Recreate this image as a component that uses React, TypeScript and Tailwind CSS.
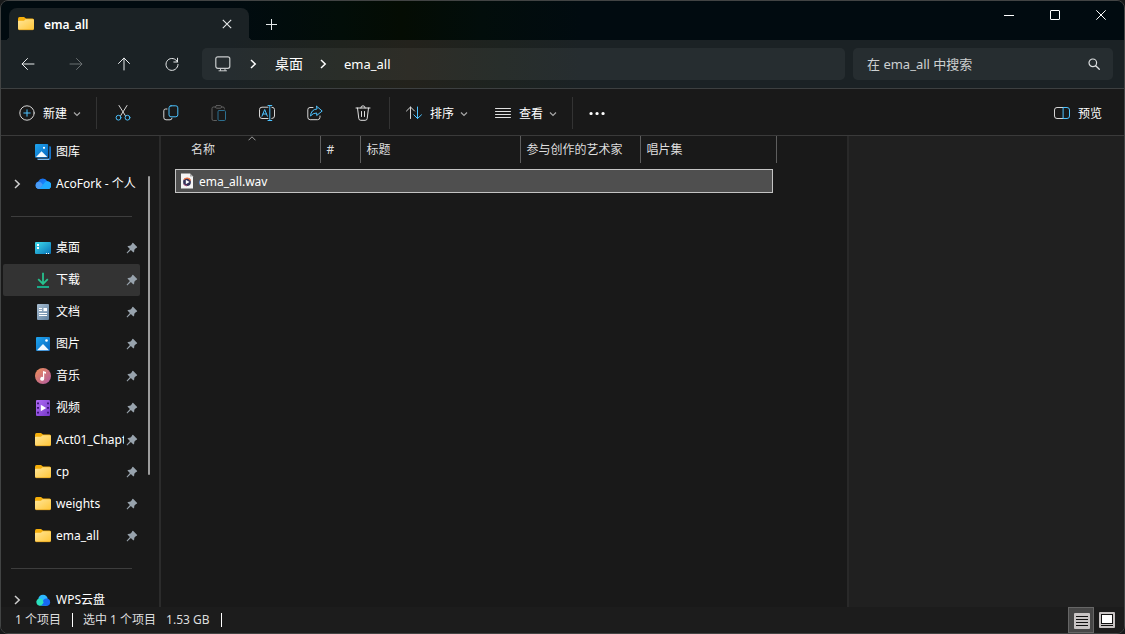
import type { ReactNode } from "react";

type IconProps = { children: ReactNode; className?: string };

function Line({ children, className = "" }: IconProps) {
  return (
    <svg viewBox="0 0 16 16" width="16" height="16" fill="none" stroke="currentColor" strokeLinecap="round" strokeLinejoin="round" className={`shrink-0 ${className}`} aria-hidden="true">
      {children}
    </svg>
  );
}

const BLUE = "#4cc2ff";

function Folder() {
  return (
    <svg viewBox="0 0 16 16" width="16" height="16" className="shrink-0" aria-hidden="true">
      <defs>
        <linearGradient id="folder" x1="0" y1="0" x2="1" y2="1">
          <stop offset="0" stopColor="#ffe69a" />
          <stop offset="1" stopColor="#ffc637" />
        </linearGradient>
      </defs>
      <path d="M0 3Q0 1 1.5 1H6L8 2.5H14.5Q16 2.5 16 4V8H0Z" fill="#f5ae0a" />
      <path d="M0 5.5Q0 4.8 .8 4.8H6L7.6 3.2H15Q16 3.2 16 4.2V12.6Q16 14 14.7 14H1.3Q0 14 0 12.6Z" fill="url(#folder)" />
      <path d="M.3 13Q.6 13.7 1.4 13.7H14.6Q15.4 13.7 15.7 13" stroke="#e2a21c" strokeWidth=".7" fill="none" />
    </svg>
  );
}

function Picture({ stacked = false }: { stacked?: boolean }) {
  return (
    <svg viewBox="0 0 16 16" width="16" height="16" className="shrink-0" aria-hidden="true">
      <defs>
        <linearGradient id="pic" x1="0" y1="0" x2="1" y2="1">
          <stop offset="0" stopColor="#1fa5ee" />
          <stop offset="1" stopColor="#0866c0" />
        </linearGradient>
      </defs>
      {stacked ? (
        <>
          <path d="M14.2 2.2H15Q16 2.2 16 3.4V14Q16 16 14 16H3.5Q2.3 16 2.3 14.8H13Q14.2 14.8 14.2 13Z" fill="#1774c9" />
          <path d="M2.3 14.8H14V16H3.5Q2.6 16 2.3 14.8Z" fill="#79b8ee" />
          <rect width="13.2" height="13.8" rx="1" fill="url(#pic)" />
          <path d="M1 13L6.5 7.2L12.3 13Z" fill="#f2f9ff" />
          <circle cx="9" cy="3.8" r="1.1" fill="#fff" />
        </>
      ) : (
        <>
          <rect x="1" y="1" width="14" height="14" rx="1" fill="url(#pic)" />
          <path d="M2 14.2L8 8L14 14.2Z" fill="#f2f9ff" />
          <circle cx="11.5" cy="4.5" r="1.3" fill="#fff" />
        </>
      )}
    </svg>
  );
}

function OneDrive() {
  return (
    <svg viewBox="0 0 16 16" width="16" height="16" className="shrink-0" aria-hidden="true">
      <defs>
        <linearGradient id="od" x1="0" y1="0" x2="1" y2="1">
          <stop offset="0" stopColor="#1c62dd" />
          <stop offset=".5" stopColor="#1584ff" />
          <stop offset="1" stopColor="#37c0ff" />
        </linearGradient>
      </defs>
      <path d="M4 13A3.9 3.9 0 0 1 3.2 5.4A5.2 5.2 0 0 1 12.3 5.2A3.9 3.9 0 0 1 12.2 13Z" fill="url(#od)" />
      <path d="M5 12.3L10.2 5.9Q11.2 4.9 12.3 5.2A3.9 3.9 0 0 1 12.2 13H4Q4.5 13 5 12.3Z" fill="#20aaff" />
      <path d="M1 11.3Q.2 9 1.4 7.1Q4 4.7 6.3 6.8L7.8 8.8L4.4 13Q2 12.8 1 11.3Z" fill="#4b9cf5" />
    </svg>
  );
}

function WpsCloud() {
  return (
    <svg viewBox="0 0 16 16" width="16" height="16" className="shrink-0" aria-hidden="true">
      <circle cx="8" cy="7.4" r="4.7" fill="#2db8ff" />
      <circle cx="11.5" cy="10.2" r="3.6" fill="#1769f2" />
      <path d="M4.5 13.7H12Q8 11.7 8 8Q5 5.1 2.3 7.5A3.7 3.7 0 0 0 4.5 13.7Z" fill="#2ae1bd" />
      <path d="M6 13.7L10 9.2L13 13.7Z" fill="#1769f2" />
    </svg>
  );
}

function Desktop() {
  return (
    <svg viewBox="0 0 16 16" width="16" height="16" className="shrink-0" aria-hidden="true">
      <defs>
        <linearGradient id="desk" x1="0" y1="0" x2="1" y2="1">
          <stop offset="0" stopColor="#3fdcec" />
          <stop offset="1" stopColor="#0872b8" />
        </linearGradient>
      </defs>
      <rect y="2" width="16" height="12" rx="1" fill="url(#desk)" />
      <path d="M2 4H4V6H2ZM2 7H4V9H2Z" fill="#fff" />
      <path d="M11 13.5H12M13 13.5H14" stroke="#fff" />
    </svg>
  );
}

function Download() {
  return (
    <svg viewBox="0 0 16 16" width="16" height="16" fill="none" className="shrink-0" aria-hidden="true">
      <path d="M8 .8V11.5M3.2 7.2L8 12L12.8 7.2" stroke="#27c18e" strokeWidth="1.8" />
      <path d="M2 15H14" stroke="#18b894" strokeWidth="1.8" />
    </svg>
  );
}

function Documents() {
  return (
    <svg viewBox="0 0 16 16" width="16" height="16" className="shrink-0" aria-hidden="true">
      <defs>
        <linearGradient id="doc" x1="0" y1="0" x2="1" y2="1">
          <stop offset="0" stopColor="#a9bfd3" />
          <stop offset="1" stopColor="#61819f" />
        </linearGradient>
      </defs>
      <rect x="2" width="12" height="16" rx="1" fill="url(#doc)" />
      <path d="M4 4.5H7M4 6.5H7M4 9.5H12M4 11.5H12" stroke="#fff" />
      <rect x="8.5" y="4" width="3.5" height="3.2" fill="#fff" />
    </svg>
  );
}

function Music() {
  return (
    <svg viewBox="0 0 16 16" width="16" height="16" className="shrink-0" aria-hidden="true">
      <defs>
        <linearGradient id="mus" x1="0" y1="0" x2="1" y2="1">
          <stop offset="0" stopColor="#f09057" />
          <stop offset="1" stopColor="#ae58a2" />
        </linearGradient>
      </defs>
      <circle cx="8" cy="8" r="8" fill="url(#mus)" />
      <path d="M8 3L11 4V5.8L9.2 5.3V10.7A2 2 0 1 1 8 9Z" fill="#fff" />
    </svg>
  );
}

function Video() {
  return (
    <svg viewBox="0 0 16 16" width="16" height="16" className="shrink-0" aria-hidden="true">
      <defs>
        <linearGradient id="vid" x1="0" y1="0" x2="1" y2="1">
          <stop offset="0" stopColor="#b06cf5" />
          <stop offset="1" stopColor="#7637c9" />
        </linearGradient>
      </defs>
      <rect x="1" width="14" height="16" rx="1" fill="url(#vid)" />
      <path d="M2 2.5H4V4.2H2ZM2 7H4V8.7H2ZM2 11.8H4V13.5H2ZM12 2.5H14V4.2H12ZM12 7H14V8.7H12ZM12 11.8H14V13.5H12Z" fill="#3d1578" />
      <path d="M5.8 4.8L11.2 8L5.8 11.2Z" fill="#fff" />
    </svg>
  );
}

function Pin() {
  return (
    <svg viewBox="0 0 12 12" width="12" height="12" className="shrink-0" aria-hidden="true">
      <path d="M7 .8L11.2 5Q11.2 6 10 6L8.3 7.8Q8.6 9.8 7.4 10.6L4.9 8.1L1.2 11.4L.6 10.8L3.9 7.1L1.4 4.6Q2.2 3.4 4.2 3.7L6 2Q6 .8 7 .8Z" fill="#98a3ad" />
    </svg>
  );
}

function Chevron({ className = "" }: { className?: string }) {
  return (
    <svg viewBox="0 0 8 10" width="8" height="10" fill="none" className={`shrink-0 ${className}`} aria-hidden="true">
      <path d="M2 1L6.2 5L2 9" stroke="currentColor" strokeWidth="1.5" />
    </svg>
  );
}

function Caret() {
  return (
    <svg viewBox="0 0 8 8" width="8" height="8" fill="none" stroke="#a8a8a8" className="shrink-0" aria-hidden="true">
      <path d="M1 2.5L4 5.5L7 2.5" strokeWidth="1.2" />
    </svg>
  );
}

type Place = { label: string; icon: ReactNode; active?: boolean };

const pinned: Place[] = [
  { label: "桌面", icon: <Desktop /> },
  { label: "下载", icon: <Download />, active: true },
  { label: "文档", icon: <Documents /> },
  { label: "图片", icon: <Picture /> },
  { label: "音乐", icon: <Music /> },
  { label: "视频", icon: <Video /> },
  { label: "Act01_Chapter", icon: <Folder /> },
  { label: "cp", icon: <Folder /> },
  { label: "weights", icon: <Folder /> },
  { label: "ema_all", icon: <Folder /> },
];

function PlaceRow({ place, expandable = false, pin = false }: { place: Place; expandable?: boolean; pin?: boolean }) {
  return (
    <li className="shrink-0">
      <a
        href="#"
        aria-current={place.active ? "page" : undefined}
        className={`flex h-8 items-center rounded-xs pr-0.5 pl-2.5 text-white ${place.active ? "bg-[#333333]" : "hover:bg-[#2a2a2a]"}`}
      >
        <span className="flex w-[22px] shrink-0">{expandable && <Chevron className="text-[#cfcfcf]" />}</span>
        {place.icon}
        <span className="mr-0.5 ml-1 min-w-0 flex-1 overflow-hidden pl-px leading-4 whitespace-nowrap">{place.label}</span>
        {pin && <Pin />}
      </a>
    </li>
  );
}

function NavButton({ label, children, disabled }: { label: string; children: ReactNode; disabled?: boolean }) {
  return (
    <button aria-label={label} disabled={disabled} className="flex h-8 w-12 items-center justify-center text-[#e8ebec] disabled:text-[#6b7072]">
      {children}
    </button>
  );
}

function Divider() {
  return <span className="h-8 w-px shrink-0 bg-[#333333]" />;
}

const tools = [
  {
    label: "剪切",
    icon: (
      <Line>
        <path d="M4 .5L10.3 10.6M12 .5L5.7 10.6" stroke="#d6d6d6" />
        <circle cx="3.5" cy="12.7" r="2.4" stroke={BLUE} />
        <circle cx="12.5" cy="12.7" r="2.4" stroke={BLUE} />
      </Line>
    ),
  },
  {
    label: "复制",
    icon: (
      <Line>
        <path d="M4 4H2.5Q.8 4 .8 5.8V12.5Q.8 14.8 3 14.8H7Q9 14.8 9 13.2" stroke="#d6d6d6" />
        <rect x="6" y=".8" width="8.8" height="11" rx="2" stroke={BLUE} />
      </Line>
    ),
  },
  {
    label: "粘贴",
    icon: (
      <Line>
        <path d="M4.5 2H2.5Q1 2 1 3.5V14Q1 15.5 2.5 15.5H5.5M10.5 2H12Q13.4 2 13.4 3.5V4" stroke="#606060" />
        <rect x="4.5" y=".6" width="6" height="2.6" rx="1.2" stroke="#606060" />
        <rect x="7" y="5.5" width="7.5" height="10" rx="1.2" stroke="#2d6f8f" />
      </Line>
    ),
  },
  {
    label: "重命名",
    icon: (
      <Line>
        <path d="M9 2.2H3Q.5 2.2 .5 4.5V11Q.5 13.5 3 13.5H9M12.8 2.2Q15.5 2.2 15.5 4.5V11Q15.5 13.5 12.8 13.5" stroke="#d6d6d6" />
        <path d="M3 11.2L5.7 4.5L8.4 11.2M4 9H7.5M10.8 .5V15.5M9 .5H12.8M9 15.5H12.8" stroke={BLUE} />
      </Line>
    ),
  },
  {
    label: "共享",
    icon: (
      <Line>
        <path d="M6 2.5H3Q.8 2.5 .8 4.8V12.2Q.8 14.7 3.2 14.7H10.5Q13 14.7 13 12.2V11" stroke="#d6d6d6" />
        <path d="M9.7 1.3L15.2 6L9.7 10.5V8Q6 7.8 3.5 11Q4 4.5 9.7 4Z" stroke={BLUE} />
      </Line>
    ),
  },
  {
    label: "删除",
    icon: (
      <Line>
        <path d="M1 3H15M5.8 3Q5.8 .8 8 .8T10.2 3M2.5 3L3.8 13.5Q4 15.3 5.8 15.3H10.2Q12 15.3 12.2 13.5L13.5 3M6.5 6.5V11.5M9.5 6.5V11.5" stroke="#e0e0e0" />
      </Line>
    ),
  },
];

function ToolText({ icon, label, caret = true }: { icon: ReactNode; label: string; caret?: boolean }) {
  return (
    <button className="flex h-8 items-center gap-2 rounded px-2 text-white hover:bg-[#2d2d2d]">
      {icon}
      <span className="flex items-center gap-1.5 pt-0.5 leading-4 whitespace-nowrap">
        {label}
        {caret && <Caret />}
      </span>
    </button>
  );
}

const columns = ["名称", "#", "标题", "参与创作的艺术家", "唱片集"];

export default function App() {
  return (
    <div className="h-screen min-h-80 bg-[#17191a]">
      <div className="flex h-full flex-col overflow-hidden rounded-lg border border-[#424444] bg-[#191919] font-['Noto_Sans','Noto_Sans_CJK_SC',sans-serif] text-xs text-white select-none">
        <header className="flex h-[39px] shrink-0 bg-[linear-gradient(90deg,#010b10_0,#010b10_230px,#020d08_340px,#040c03_400px,#020d0b_480px,#010b10_580px)]">
          <div className="relative mt-[7px] ml-2 flex h-8 w-60 items-center rounded-t-lg bg-[#1b2225] pr-2.5 pl-[9px] before:absolute before:bottom-0 before:-left-1 before:size-1 before:bg-[radial-gradient(circle_at_0_0,transparent_4px,#1b2225_4px)] after:absolute after:-right-1 after:bottom-0 after:size-1 after:bg-[radial-gradient(circle_at_100%_0,transparent_4px,#1b2225_4px)]">
            <Folder />
            <span className="ml-2.5 flex-1 pt-0.5 leading-4 font-semibold">ema_all</span>
            <button aria-label="关闭标签页" className="flex size-6 items-center justify-center">
              <svg viewBox="0 0 10 10" width="10" height="10" stroke="#e6e9ea" strokeWidth="1.1" aria-hidden="true">
                <path d="M.8 .8L9.2 9.2M9.2 .8L.8 9.2" />
              </svg>
            </button>
          </div>
          <button aria-label="新建标签页" className="mt-[7px] ml-2 flex h-8 w-7 items-center justify-center">
            <svg viewBox="0 0 11 11" width="11" height="11" stroke="#e6e9ea" aria-hidden="true">
              <path d="M5.5 0V11M0 5.5H11" />
            </svg>
          </button>
          <div className="ml-auto flex h-7">
            <button aria-label="最小化" className="flex w-[46px] items-center justify-center">
              <svg viewBox="0 0 10 10" width="10" height="10" stroke="#fff" aria-hidden="true"><path d="M0 5.5H10" /></svg>
            </button>
            <button aria-label="最大化" className="flex w-[46px] items-center justify-center">
              <svg viewBox="0 0 10 10" width="10" height="10" stroke="#fff" fill="none" aria-hidden="true"><rect x=".5" y=".5" width="9" height="9" rx=".5" /></svg>
            </button>
            <button aria-label="关闭" className="flex w-[46px] items-center justify-center">
              <svg viewBox="0 0 10 10" width="10" height="10" stroke="#fff" aria-hidden="true"><path d="M.3 .3L9.7 9.7M9.7 .3L.3 9.7" /></svg>
            </button>
          </div>
        </header>

        <div className="flex h-[49px] shrink-0 items-center border-b border-[#3d4041] bg-[linear-gradient(90deg,#1b2225_0,#1b2225_230px,#1f231e_340px,#23221c_410px,#1d2320_500px,#1b2225_580px)] pr-[11px] pl-[3px]">
          <nav className="flex" aria-label="导航">
            <NavButton label="后退"><Line><path d="M14 8H2.2M7.5 2.5L2 8L7.5 13.5" /></Line></NavButton>
            <NavButton label="前进" disabled><Line><path d="M2 8H13.8M8.5 2.5L14 8L8.5 13.5" /></Line></NavButton>
            <NavButton label="上移"><Line><path d="M8 14V2.2M2.5 7.5L8 2L13.5 7.5" /></Line></NavButton>
            <NavButton label="刷新"><Line><path d="M13.5 6A6 6 0 1 0 14 8.5M13.5 2.2V6H9.8" /></Line></NavButton>
          </nav>
          <div className="ml-1.5 flex h-8 min-w-0 flex-1 items-center rounded-[5px] bg-white/5 pl-[13px] text-[13px] leading-4 text-white">
            <Line className="text-[#c9cccd]">
              <rect x=".8" y=".8" width="14" height="11.5" rx="2" strokeWidth="1.2" />
              <path d="M5.5 12.5V14.5M10 12.5V14.5M4 14.8H11.5" />
            </Line>
            <Chevron className="ml-[18px]" />
            <a href="#" className="ml-[18px] text-sm leading-4">桌面</a>
            <Chevron className="ml-4" />
            <a href="#" className="ml-[17px]">ema_all</a>
          </div>
          <label className="ml-2 flex h-8 w-[260px] shrink-0 items-center rounded-[5px] bg-white/5 pr-[11px] pl-3.5">
            <input type="search" aria-label="搜索" placeholder="在 ema_all 中搜索" className="min-w-0 flex-1 bg-transparent text-[13px] leading-4 outline-none placeholder:text-[#cdd0d1]" />
            <Line className="text-[#dcdfe0]"><circle cx="6.8" cy="6.8" r="3.8" strokeWidth="1.2" /><path d="M9.7 9.7L13.3 13.3" strokeWidth="1.3" /></Line>
          </label>
        </div>

        <div role="toolbar" className="flex h-[47px] shrink-0 items-center border-b border-[#3a3a3a] pt-0.5 pr-3.5 pl-2.5">
          <ToolText label="新建" icon={<Line><circle cx="8" cy="8" r="7.2" stroke="#d6d6d6" /><path d="M8 4.8V11.2M4.8 8H11.2" stroke={BLUE} /></Line>} />
          <span className="ml-[7px] flex items-center gap-0.5">
            <Divider />
            <span className="flex">
              {tools.map((tool) => (
                <button key={tool.label} aria-label={tool.label} className="flex h-8 w-12 items-center justify-center">
                  {tool.icon}
                </button>
              ))}
            </span>
            <Divider />
          </span>
          <span className="ml-2 flex gap-[11px]">
            <ToolText label="排序" icon={<Line><path d="M4.5 13.5V2M.5 6L4.5 2L8.5 6" stroke="#d6d6d6" /><path d="M11.5 2V13.5M7.8 9.8L11.5 13.5L15.5 9.8" stroke={BLUE} /></Line>} />
            <ToolText label="查看" icon={<Line><path d="M.5 3.5H15.5M.5 6.5H15.5M.5 9.5H15.5M.5 12.5H15.5" stroke="#e0e0e0" /></Line>} />
          </span>
          <span className="ml-[7px] flex items-center">
            <Divider />
            <button aria-label="更多" className="flex h-8 w-12 items-center justify-center">
              <Line className="text-white"><path d="M2 8.5H2.1M8 8.5H8.1M14 8.5H14.1" strokeWidth="3.2" /></Line>
            </button>
          </span>
          <span className="ml-auto">
            <ToolText label="预览" caret={false} icon={<Line><path d="M9.5 2.5H3Q.5 2.5 .5 5V11Q.5 13.5 3 13.5H9.5" stroke="#d6d6d6" /><path d="M9.5 2.5H13Q15.5 2.5 15.5 5V11Q15.5 13.5 13 13.5H9.5Z" stroke={BLUE} /></Line>} />
          </span>
        </div>

        <div className="flex min-h-0 flex-1">
          <aside className="flex w-[160px] shrink-0 overflow-hidden border-r-2 border-[#2b2b2b] pl-0.5">
            <ul className="flex w-[137px] flex-col overflow-hidden">
              <PlaceRow place={{ label: "图库", icon: <Picture stacked /> }} />
              <PlaceRow place={{ label: "AcoFork - 个人", icon: <OneDrive /> }} expandable />
              <li className="flex h-8 shrink-0 items-center pr-2 pl-2"><hr className="w-full border-[#3d3d3d]" /></li>
              {pinned.map((place) => <PlaceRow key={place.label} place={place} pin />)}
              <li className="flex h-8 shrink-0 items-center pr-2 pl-2"><hr className="w-full border-[#3d3d3d]" /></li>
              <PlaceRow place={{ label: "WPS云盘", icon: <WpsCloud /> }} expandable />
            </ul>
            <div className="ml-2 flex w-0.5 flex-col pt-10">
              <span className="h-[70%] max-h-[299px] rounded-full bg-[#9d9d9d]" />
            </div>
          </aside>

          <main className="min-w-0 flex-1 overflow-hidden">
            <table className="w-[615px] table-fixed border-collapse text-left">
              <colgroup>
                <col className="w-[159px]" />
                <col className="w-10" />
                <col className="w-40" />
                <col className="w-[120px]" />
                <col className="w-[136px]" />
              </colgroup>
              <thead>
                <tr>
                  {columns.map((name, i) => (
                    <th key={name} scope="col" className={`relative h-[27px] border-r border-[#5e5e5e] p-0 leading-4 font-normal whitespace-nowrap text-[#dedede] ${i === 0 ? "pl-[30px]" : "pl-1.5"}`}>
                      {name}
                      {i === 0 && (
                        <svg viewBox="0 0 8 5" width="8" height="5" fill="none" stroke="#9a9a9a" className="absolute top-0 left-[87px]" aria-hidden="true">
                          <path d="M.5 4.3L4 .8L7.5 4.3" />
                        </svg>
                      )}
                    </th>
                  ))}
                </tr>
              </thead>
              <tbody>
                <tr aria-selected="true">
                  <td colSpan={5} className="pt-1.5 pr-[3px] pl-3.5">
                    <div className="flex h-6 items-center border border-[#c4c4c4] bg-[#4f4f4f] pl-[3px]">
                      <svg viewBox="0 0 16 16" width="16" height="16" className="shrink-0" aria-hidden="true">
                        <path d="M2 .5H11L14 3.5V15.5H2Z" fill="#f4f4f4" />
                        <path d="M11 .5V3.5H14Z" fill="#a8a8a8" />
                        <circle cx="8" cy="9" r="3.9" fill="#333159" />
                        <path d="M4.9 6.6A3.9 3.9 0 0 1 11.6 7.5" stroke="#f07845" strokeWidth="1.2" fill="none" />
                        <path d="M4.7 11A3.9 3.9 0 0 0 8 12.9" stroke="#b84f78" fill="none" />
                        <path d="M6.8 6.8L10.5 9L6.8 11.2Z" fill="#fff" />
                      </svg>
                      <span className="ml-1 pt-0.5 leading-4">ema_all.wav</span>
                    </div>
                  </td>
                </tr>
              </tbody>
            </table>
          </main>

          <section aria-label="预览" className="w-[277px] shrink-0 border-l-2 border-[#292929] bg-[#202020]" />
        </div>

        <footer className="flex h-[26px] shrink-0 items-center bg-[#1c1c1c] pr-1 pl-3.5 leading-4 text-[#dedede]">
          <span>1 个项目</span>
          <span className="mr-2.5 ml-[11px] h-3.5 w-px bg-white" />
          <span>选中 1 个项目</span>
          <span className="ml-2.5">1.53 GB</span>
          <span className="mr-2.5 ml-[11px] h-3.5 w-px bg-white" />
          <div className="ml-auto flex">
            <button aria-label="详细信息" aria-pressed="true" className="flex size-[26px] items-center justify-center border border-[#666666] bg-[#474747] pt-px pl-px">
              <svg viewBox="0 0 16 16" width="16" height="16" aria-hidden="true">
                <rect width="16" height="16" rx="1" fill="#c8c4c4" />
                <path d="M2 3.5H14M2 6.5H14M2 9.5H14M2 12.5H14" stroke="#111" />
              </svg>
            </button>
            <button aria-label="大缩略图" className="flex size-[26px] items-center justify-center">
              <svg viewBox="0 0 16 16" width="16" height="16" aria-hidden="true">
                <rect width="16" height="16" rx="1" fill="#c8c4c4" />
                <rect x="2.5" y="2.5" width="11" height="9" fill="#fff" stroke="#111" />
                <path d="M2 13.5H14" stroke="#111" />
              </svg>
            </button>
          </div>
        </footer>
      </div>
    </div>
  );
}
